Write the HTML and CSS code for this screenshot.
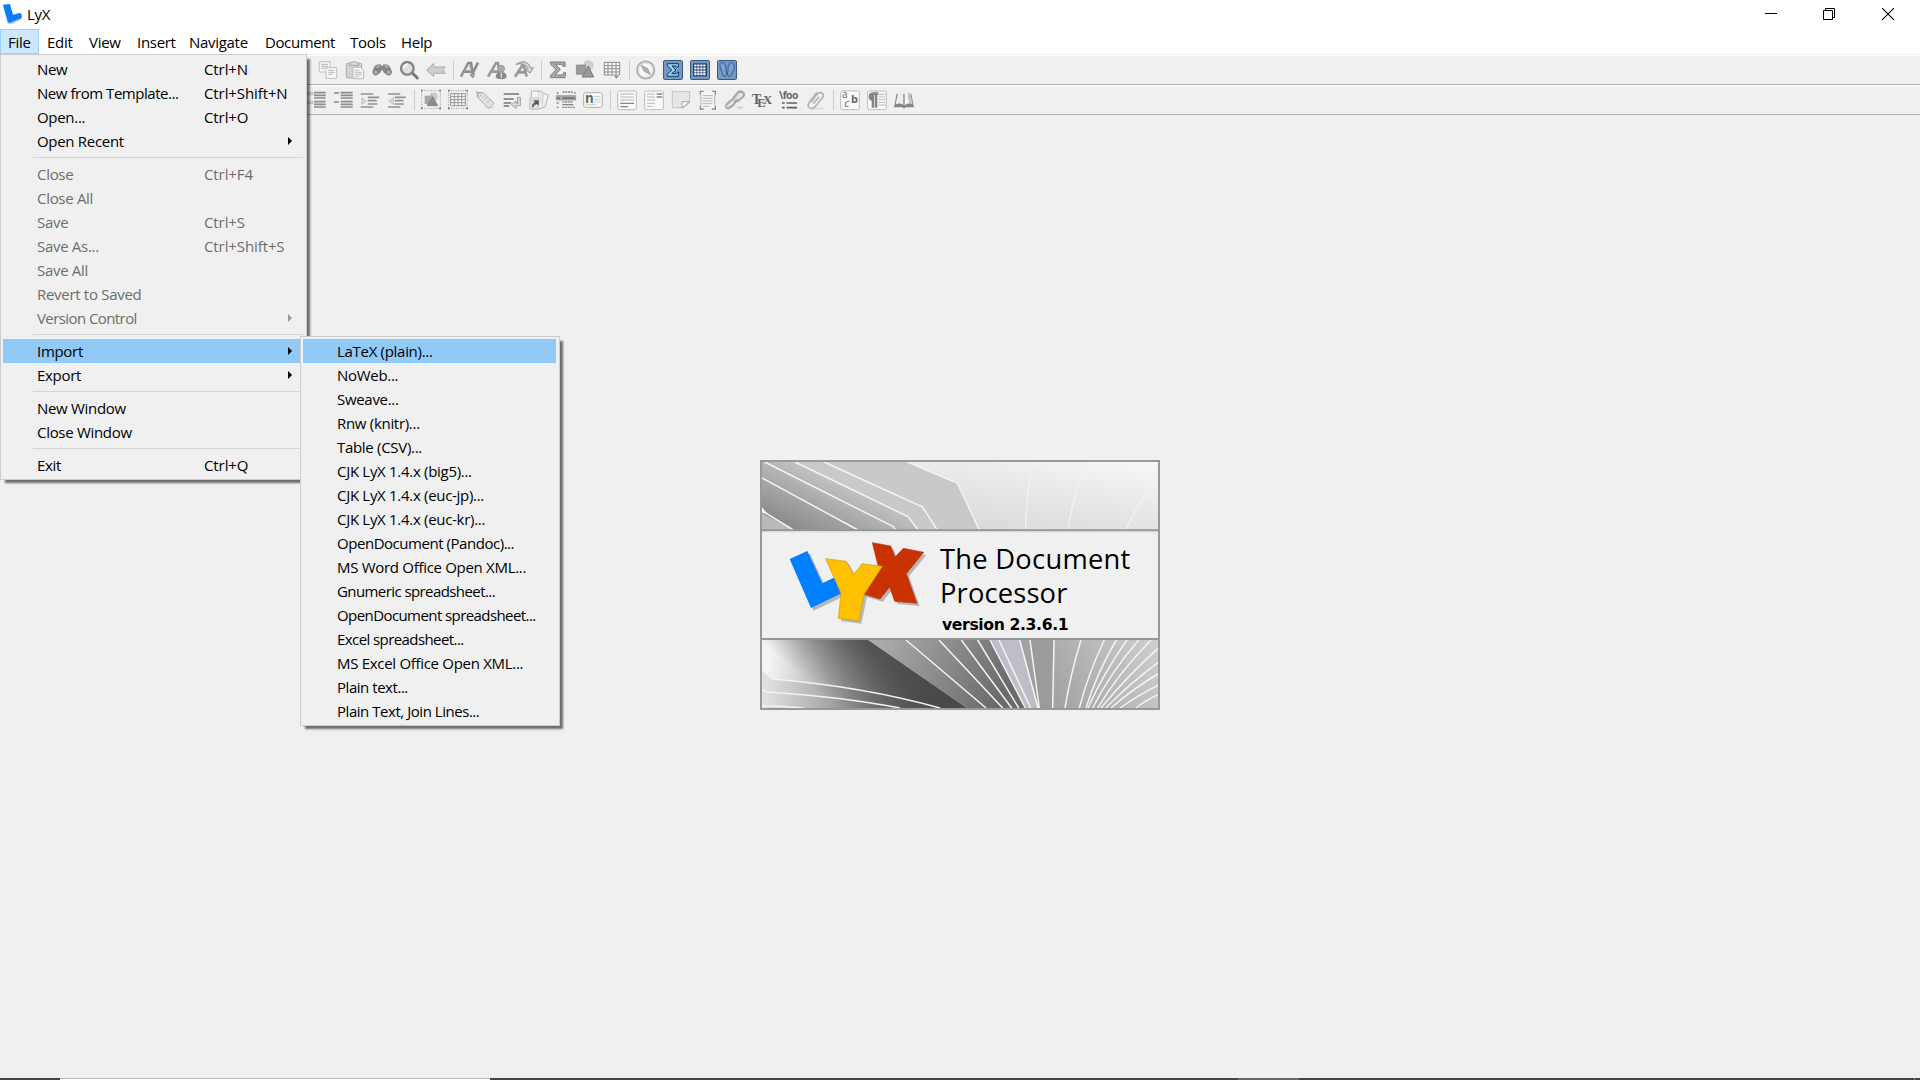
FILE: index.html
```html
<!DOCTYPE html>
<html lang="en">
<head>
<meta charset="utf-8">
<title>LyX</title>
<link rel="stylesheet" href="styles.css">
</head>
<body>
<div class="window">
  <header class="titlebar">
    <svg class="app-icon" viewBox="0 0 60 60"><path d="M5 8L26 6L34 33L62 36L60 48L26 66L18 60Z" fill="#aaa" opacity=".5" transform="translate(-2 -1)"/><path d="M3 2L24 0L33 32L52 27L59 30V42L24 57L18 55Z" fill="#0b7dfa"/></svg>
    <span class="title">LyX</span>
    <div class="controls">
      <svg viewBox="0 0 12 12"><path d="M0 5.500H12" stroke="#000"/></svg>
      <svg viewBox="0 0 12 12"><path d="M.5 2.500H9.500V11.500H.5ZM2.500 2.500V.5H11.500V9.500H9.500" fill="none" stroke="#000"/></svg>
      <svg viewBox="0 0 12 12"><path d="M0 0L12 12M12 0L0 12" stroke="#000" stroke-width="1.100"/></svg>
    </div>
  </header>

  <nav class="menubar">
    <span class="menu-title w-file open">File
      <div class="menu menu-file">
        <div class="item"><span>New</span><kbd>Ctrl+N</kbd></div>
        <div class="item snug"><span>New from Template...</span><kbd>Ctrl+Shift+N</kbd></div>
        <div class="item"><span>Open...</span><kbd>Ctrl+O</kbd></div>
        <div class="item sub"><span>Open Recent</span></div>
        <hr>
        <div class="item off"><span>Close</span><kbd>Ctrl+F4</kbd></div>
        <div class="item off"><span>Close All</span></div>
        <div class="item off"><span>Save</span><kbd>Ctrl+S</kbd></div>
        <div class="item off"><span>Save As...</span><kbd>Ctrl+Shift+S</kbd></div>
        <div class="item off"><span>Save All</span></div>
        <div class="item off"><span>Revert to Saved</span></div>
        <div class="item off sub tight"><span>Version Control</span></div>
        <hr>
        <div class="item sub active"><span>Import</span></div>
        <div class="item sub"><span>Export</span></div>
        <hr>
        <div class="item"><span>New Window</span></div>
        <div class="item"><span>Close Window</span></div>
        <hr>
        <div class="item"><span>Exit</span><kbd>Ctrl+Q</kbd></div>
      </div>
      <div class="menu menu-import">
        <div class="item active"><span>LaTeX (plain)...</span></div>
        <div class="item"><span>NoWeb...</span></div>
        <div class="item"><span>Sweave...</span></div>
        <div class="item"><span>Rnw (knitr)...</span></div>
        <div class="item"><span>Table (CSV)...</span></div>
        <div class="item"><span>CJK LyX 1.4.x (big5)...</span></div>
        <div class="item"><span>CJK LyX 1.4.x (euc-jp)...</span></div>
        <div class="item"><span>CJK LyX 1.4.x (euc-kr)...</span></div>
        <div class="item snug"><span>OpenDocument (Pandoc)...</span></div>
        <div class="item"><span>MS Word Office Open XML...</span></div>
        <div class="item tight"><span>Gnumeric spreadsheet...</span></div>
        <div class="item tight"><span>OpenDocument spreadsheet...</span></div>
        <div class="item tight"><span>Excel spreadsheet...</span></div>
        <div class="item"><span>MS Excel Office Open XML...</span></div>
        <div class="item snug"><span>Plain text...</span></div>
        <div class="item snug"><span>Plain Text, Join Lines...</span></div>
      </div>
    </span>
    <span class="menu-title w-edit">Edit</span>
    <span class="menu-title w-view">View</span>
    <span class="menu-title w-insert">Insert</span>
    <span class="menu-title w-navigate">Navigate</span>
    <span class="menu-title w-document">Document</span>
    <span class="menu-title w-tools">Tools</span>
    <span class="menu-title w-help">Help</span>
  </nav>

  <div class="toolbar standard">
    <!-- copy -->
    <svg viewBox="54 30 60 60"><g fill="#f8f8f8" stroke="#c0c0c0" stroke-width="3"><path d="M58 35H90V66H58Z"/><path d="M78 53H110V85H78Z"/></g><path d="M64 43H84M64 49H84M64 55H76M85 61H103M85 67H103M85 73H97" stroke="#b4b4b4" stroke-width="3"/></svg>
    <!-- paste -->
    <svg viewBox="135 30 60 60"><rect x="139" y="40" width="46" height="44" rx="3" fill="#d2d2d2" stroke="#b0b0b0" stroke-width="3"/><path d="M149 46V38H156Q162 30 168 38H176V46Z" fill="#ddd" stroke="#a4a4a4" stroke-width="3"/><path d="M159 52H181L191 62V86H159Z" fill="#f7f7f7" stroke="#bcbcbc" stroke-width="3"/><path d="M164 61H178M164 67H186M164 73H186M164 79H178" stroke="#bbb" stroke-width="3"/></svg>
    <!-- find -->
    <svg viewBox="216 30 60 60"><path d="M218 67Q219 50 229 44L241 43L246 49L251 43L263 44Q273 50 275 67L267 75L252 69L246 59L240 69L226 76Z" fill="#888"/><circle cx="227" cy="67" r="8" fill="#aaa" stroke="#727272" stroke-width="3"/><circle cx="266" cy="67" r="8" fill="#aaa" stroke="#727272" stroke-width="3"/><path d="M229 52L238 47M254 47L264 52" stroke="#bbb" stroke-width="4"/></svg>
    <!-- zoom -->
    <svg viewBox="297 30 60 60"><path d="M337 69L352 84" stroke="#777" stroke-width="9" stroke-linecap="round"/><circle cx="322" cy="55" r="19" fill="#e0e0e0" stroke="#858585" stroke-width="7"/><path d="M311 53Q314 43 324 43" stroke="#fff" stroke-width="5" fill="none"/></svg>
    <!-- back -->
    <svg viewBox="378 30 60 60"><path d="M380 60L401 40V51H436L428 60L436 70H401V80Z" fill="#cfcfcf" stroke="#ababab" stroke-width="3" stroke-linejoin="round"/></svg>
    <i></i>
    <!-- emphasis -->
    <svg viewBox="480 30 60 60"><path d="M483 80L505 39H513L519 80M491 65H516M513 79L534 38" fill="none" stroke="#8c8c8c" stroke-width="8"/><path d="M485 78L507 42L513 76" fill="none" stroke="#bbb" stroke-width="2"/><path d="M510 74L519 83L524 70" fill="#aaa" stroke="#888" stroke-width="3"/></svg>
    <!-- noun -->
    <svg viewBox="561 30 60 60"><path d="M564 80L588 39H594L599 75M572 65H598" fill="none" stroke="#999" stroke-width="8"/><circle cx="604" cy="56" r="10" fill="#aaa" stroke="#929292" stroke-width="2"/><path d="M587 82Q588 68 598 67H610Q619 69 620 82L612 87H594Z" fill="#888"/><path d="M604 68V83" stroke="#ddd" stroke-width="4"/></svg>
    <!-- apply style -->
    <svg viewBox="642 30 60 60"><path d="M645 80L670 42L680 80M652 67H678" fill="none" stroke="#999" stroke-width="8"/><path d="M648 43Q680 23 693 54L700 53L690 69L676 58L684 56Q673 36 648 43Z" fill="#d6d6d6" stroke="#909090" stroke-width="3"/></svg>
    <i></i>
    <!-- math -->
    <svg viewBox="744 30 60 60"><path d="M751 36H795V49H789L786 43H766L781 58L765 75H788L791 68H797L795 83H751V76L769 59L751 42Z" fill="#aaa" stroke="#7c7c7c" stroke-width="3"/></svg>
    <!-- graphics -->
    <svg viewBox="825 30 60 60"><circle cx="865" cy="46" r="14" fill="#d0d0d0" stroke="#bbb" stroke-width="2"/><path d="M829 45H857V73H829Z" fill="#9c9c9c" stroke="#828282" stroke-width="2"/><path d="M865 48L881 81H846Z" fill="#999" stroke="#777" stroke-width="3"/></svg>
    <!-- table -->
    <svg viewBox="6 30 60 60"><path d="M13 37H59V75H13Z" fill="#f8f8f8"/><path d="M13 37H59V75H13ZM24 37V75M36 37V75M48 37V75M13 47H59M13 56H59M13 66H59" fill="none" stroke="#8d8d8d" stroke-width="3"/><path d="M42 78H56L49 86Z" fill="#888"/></svg>
    <i></i>
    <!-- navigate -->
    <svg viewBox="108 30 60 60"><circle cx="137" cy="60" r="26" fill="#f8f8f8" stroke="#aaa" stroke-width="5"/><circle cx="137" cy="60" r="21" fill="none" stroke="#ccc" stroke-width="2"/><path d="M123 45L144 56L151 74L132 64Z" fill="#b0b0b0" stroke="#999" stroke-width="2"/></svg>
    <!-- math toolbar -->
    <svg viewBox="189 30 60 60"><rect class="pressed" x="190.500" y="31.500" width="57" height="57" rx="4"/><path d="M202 41H235V51H229L227 48H216L228 60L215 71H230L233 66H236L235 79H202V73L215 60L202 47Z" fill="#8fd0f5" stroke="#163a68" stroke-width="3"/></svg>
    <!-- table toolbar -->
    <svg viewBox="270 30 60 60"><rect class="pressed" x="271.500" y="31.500" width="57" height="57" rx="4"/><path d="M279 40H321V79H279Z" fill="#1d3d70"/><path d="M283 44H289V49H283ZM292 44H298V49H292ZM301 44H307V49H301ZM310 44H316V49H310ZM283 53H289V58H283ZM292 53H298V58H292ZM301 53H307V58H301ZM310 53H316V58H310ZM283 62H289V67H283ZM292 62H298V67H292ZM301 62H307V67H301ZM310 62H316V67H310ZM283 70H289V75H283ZM292 70H298V75H292ZM301 70H307V75H301ZM310 70H316V75H310Z" fill="#fff" stroke="#fff" stroke-width="1"/></svg>
    <!-- review toolbar -->
    <svg viewBox="351 30 60 60"><rect class="pressed" x="352.500" y="31.500" width="57" height="57" rx="4"/><g fill="#7ba0d0" stroke="#22508f" stroke-width="2.500"><path d="M364 37Q373 36 377 48L378 61Q382 76 377 79Q370 81 368 72L364 60Q355 43 364 37Z"/><path d="M395 37Q405 39 403 52Q401 64 396 68Q394 79 387 79Q380 77 384 62V52Q387 37 395 37Z"/></g></svg>
  </div>

  <div class="toolbar extra">
    <!-- numbered list -->
    <svg viewBox="18 120 60 60"><path d="M24 128H38V134H24ZM24 155H38V161H24Z" fill="#eee" stroke="#999" stroke-width="2"/><path d="M42 128H77M42 136H77M42 144H77M42 155H77M42 163H77M42 171H77" stroke="#8d8d8d" stroke-width="5"/></svg>
    <!-- bullet list -->
    <svg viewBox="99 120 60 60"><path d="M102 129H117M102 156H117" stroke="#888" stroke-width="5"/><path d="M122 128H158M122 136H158M122 144H158M122 155H158M122 163H158M122 171H158" stroke="#8d8d8d" stroke-width="5"/></svg>
    <!-- increase depth -->
    <svg viewBox="180 120 60 60"><path d="M184 132H218M205 142H236M205 152H228M205 162H230M184 171H218" stroke="#929292" stroke-width="5" stroke-linecap="round"/><path d="M186 143V163L198 153Z" fill="#ddd" stroke="#aaa" stroke-width="2"/></svg>
    <!-- decrease depth -->
    <svg viewBox="261 120 60 60"><path d="M266 132H299M286 142H316M286 152H308M286 162H310M266 171H299" stroke="#929292" stroke-width="5" stroke-linecap="round"/><path d="M280 143V163L267 153Z" fill="#ddd" stroke="#aaa" stroke-width="2"/></svg>
    <i></i>
    <!-- figure float -->
    <svg viewBox="363 120 60 60"><path class="dots" d="M365 122H421V175H365Z"/><path class="corners" d="M363 122H368M418 122H423M363 175H368M418 175H423"/><circle cx="401" cy="140" r="12" fill="#ccc" stroke="#bbb"/><path d="M374 137H400V162H374Z" fill="#a5a5a5"/><path d="M399 141L413 167H381Z" fill="#8d8d8d" stroke="#777" stroke-width="2"/></svg>
    <!-- table float -->
    <svg viewBox="444 120 60 60"><path class="dots" d="M446 122H502V175H446Z"/><path class="corners" d="M444 122H449M499 122H504M444 175H449M499 175H504"/><path d="M452 131H496V167H452ZM463 131V167M474 131V167M485 131V167M452 140H496M452 149H496M452 158H496" fill="#fafafa" stroke="#949494" stroke-width="3"/></svg>
    <!-- label -->
    <svg viewBox="525 120 60 60"><ellipse cx="569" cy="172" rx="15" ry="4" fill="#ddd"/><path d="M531 127L549 128L582 159L567 175L533 143Z" fill="#e4e4e4" stroke="#acacac" stroke-width="3"/><circle cx="539" cy="135" r="4" fill="#fff" stroke="#999" stroke-width="2"/><path d="M548 142L553 138M553 149L561 143M561 157L571 151M527 124L536 130" stroke="#999" stroke-width="2"/></svg>
    <!-- line break -->
    <svg viewBox="606 120 60 60"><path d="M611 132H657M611 147H641M611 159H634M611 168H628" stroke="#929292" stroke-width="6"/><path d="M652 142H661V167H648V175L634 164L648 153V160H653Z" fill="#ddd" stroke="#a0a0a0" stroke-width="3"/></svg>
    <!-- cross-reference -->
    <svg viewBox="687 120 60 60"><path d="M695 123H723L730 130L745 135L735 170L718 177H690Z" fill="#f5f5f5" stroke="#b4b4b4" stroke-width="3"/><path d="M723 123V160M730 130L727 170M715 123V142" stroke="#bbb" stroke-width="2"/><path d="M689 144H717V177H689Z" fill="#ddd" stroke="#bbb" stroke-width="2"/><path d="M698 172Q694 163 706 157L702 152H715V165L710 161Q702 162 698 172Z" fill="#555" stroke="#555" stroke-width="2"/></svg>
    <!-- citation -->
    <svg viewBox="768 120 60 60"><path d="M770 129H778M788 126H818M822 129H827M770 159H777M787 156H818M770 172H777M787 172H824" stroke="#888" stroke-width="4" stroke-dasharray="6 2"/><path d="M769 137H827V150H769Z" fill="#aaa" stroke="#888" stroke-width="2"/><path d="M771 144H780M787 144H824" stroke="#6e6e6e" stroke-width="4"/><path d="M787 164H820" stroke="#888" stroke-width="4"/></svg>
    <!-- nomenclature -->
    <svg viewBox="849 120 60 60"><rect x="851" y="128" width="56" height="44" rx="6" fill="#fafafa" stroke="#b0b0b0" stroke-width="3"/><path d="M882 140H902M882 148H902M882 156H902M857 164H890" stroke="#ccc" stroke-width="3"/><text x="855" y="158" class="ic-bold" font-size="40">n</text></svg>
    <i></i>
    <!-- footnote -->
    <svg viewBox="51 120 60 60"><rect class="page" x="53" y="123" width="56" height="56" rx="5"/><path d="M61 132H102M61 141H102M61 150H102" stroke="#b4b4b4" stroke-width="3"/><path d="M61 160H102M61 170H85" stroke="#858585" stroke-width="4"/></svg>
    <!-- margin note -->
    <svg viewBox="132 120 60 60"><rect class="page" x="134" y="123" width="56" height="56" rx="5"/><path d="M141 132H165M141 141H165M141 150H165M141 160H165M141 169H158" stroke="#b8b8b8" stroke-width="3"/><path d="M170 132H187M170 141H187" stroke="#858585" stroke-width="4"/></svg>
    <!-- note -->
    <svg viewBox="213 120 60 60"><path d="M217 125H269V158L251 173H217Z" fill="#e6e6e6" stroke="#c2c2c2" stroke-width="3"/><path d="M269 155H246V174Z" fill="#f5f5f5" stroke="#ababab" stroke-width="3"/></svg>
    <!-- box -->
    <svg viewBox="294 120 60 60"><path d="M303 127H343V174H303Z" fill="#f7f7f7"/><path d="M301 134V124H311M336 124H346V134M301 167V177H311M336 177H346V167" fill="none" stroke="#8d8d8d" stroke-width="4"/><path d="M303 134V167M344 134V167M308 137H338M308 145H338M308 153H338M308 161H338M308 169H329" stroke="#b4b4b4" stroke-width="3"/></svg>
    <!-- hyperlink -->
    <svg viewBox="375 120 60 60"><g fill="none" stroke-linecap="round"><path d="M399 146L414 127Q424 121 431 130Q435 137 423 145L413 153L405 148" stroke="#aaa" stroke-width="7"/><path d="M404 151L393 151L379 165Q376 174 385 175L399 166L410 151" stroke="#aaa" stroke-width="7"/><path d="M380 170L397 154M400 152L424 130" stroke="#d8d8d8" stroke-width="4"/></g><path d="M408 170H433L421 179Z" fill="#d0d0d0"/></svg>
    <!-- TeX code -->
    <svg viewBox="456 120 60 60"><g class="ic-serif"><text x="456" y="161" font-size="41" textLength="25">T</text><text x="472" y="171" font-size="37">E</text><text x="489" y="161" font-size="38">X</text></g></svg>
    <!-- macro -->
    <svg viewBox="537 120 60 60"><text x="537" y="147" class="ic-bold" font-size="31" textLength="58">\foo</text><path d="M546 159H554M546 173H554M560 159H591M560 173H591" stroke="#606060" stroke-width="5"/></svg>
    <!-- include file -->
    <svg viewBox="618 120 60 60"><ellipse cx="651" cy="176" rx="24" ry="3" fill="#ddd"/><path d="M633 157L651 133Q661 124 668 131Q673 137 666 145L645 171Q634 180 626 171Q622 164 629 155L651 127M640 161L657 141" fill="none" stroke="#b4b4b4" stroke-width="5"/></svg>
    <i></i>
    <!-- text style -->
    <svg viewBox="720 120 60 60"><rect class="page" x="722" y="123" width="56" height="56" rx="5"/><g class="ic-sans"><text x="726" y="144" font-size="30">a</text><text x="733" y="172" font-size="33" font-style="italic">c</text><text x="753" y="158" font-size="33" font-weight="bold">b</text></g></svg>
    <!-- paragraph settings -->
    <svg viewBox="801 120 60 60"><rect class="page" x="803" y="123" width="56" height="56" rx="5"/><path d="M835 133H856M835 141H856M835 149H856M835 157H856M835 165H856" stroke="#bbb" stroke-width="3"/><path d="M835 127V134H832V173H824V135H822V173H815V152Q806 150 806 140Q806 128 818 127Z" fill="#858585"/></svg>
    <!-- thesaurus -->
    <svg viewBox="882 120 60 60"><path d="M882 172L890 131L912 133L934 131L942 172H917Q912 178 907 172Z" fill="#858585"/><path d="M887 163L894 129Q905 125 911 132V165Q900 157 887 163Z" fill="#ededed"/><path d="M913 132L923 125L928 159L913 166Z" fill="#f6f6f6"/><path d="M923 126L932 132L938 163Q926 158 915 165L928 158Z" fill="#c4c4c4"/><path d="M912 131V168" stroke="#888" stroke-width="3"/></svg>
  </div>

  <main class="workspace">
    <svg class="splash" viewBox="30 30 1200 750">
      <defs>
        <linearGradient id="t0" gradientUnits="userSpaceOnUse" x1="100" y1="235" x2="190" y2="40"><stop offset="0" stop-color="#878787"/><stop offset="1" stop-color="#c9c8c6"/></linearGradient>
        <linearGradient id="t1" x1="0" y1="1" x2="1" y2="0"><stop offset="0" stop-color="#cecece"/><stop offset="1" stop-color="#f7f7f7"/></linearGradient>
        <linearGradient id="b0" gradientUnits="userSpaceOnUse" x1="50" y1="690" x2="560" y2="750"><stop offset="0" stop-color="#f4f4f4"/><stop offset=".5" stop-color="#999"/><stop offset="1" stop-color="#3d3d3d"/></linearGradient>
        <linearGradient id="b1" gradientUnits="userSpaceOnUse" x1="330" y1="570" x2="200" y2="720"><stop offset="0" stop-color="#4b4b4b" stop-opacity=".85"/><stop offset="1" stop-color="#4b4b4b" stop-opacity="0"/></linearGradient>
        <linearGradient id="b2" gradientUnits="userSpaceOnUse" x1="400" y1="570" x2="740" y2="770"><stop offset="0" stop-color="#aaa"/><stop offset="1" stop-color="#6a6a6a"/></linearGradient>
        <linearGradient id="b3" gradientUnits="userSpaceOnUse" x1="850" y1="760" x2="1220" y2="570"><stop offset="0" stop-color="#9b9b9b"/><stop offset="1" stop-color="#cfcfcf"/></linearGradient>
      </defs>
      <rect x="30" y="30" width="1200" height="750" fill="#f0f0f0"/>
      <path d="M36 36H1224V240H36Z" fill="url(#t1)"/>
      <path d="M36 36H472L622 99L688 240H36Z" fill="#c9c9ca"/>
      <path d="M36 36H135L474 200L506 240H36Z" fill="url(#t0)"/>
      <path d="M36 190L130 240H36Z" fill="#b9b9b9"/>
      <path d="M36 172L55 194L36 188Z" fill="#fff"/>
      <g fill="none" stroke="#f4f4f4" stroke-width="4.500">
        <path d="M472 36L622 99L688 240M222 36L518 171L562 240M135 36L474 200L504 240M44 36L430 230L437 240M36 84L324 240M36 180L55 194L130 240"/>
        <path d="M851 36Q828 130 827 240M1009 36Q970 130 954 240M1224 80Q1160 165 1128 240" opacity=".8"/>
      </g>
      <path d="M36 570H355L650 774H36Z" fill="url(#b0)"/>
      <path d="M36 570H355L650 774H36Z" fill="url(#b1)"/>
      <path d="M36 660L68 687Q340 710 570 774H36Z" fill="#777" opacity=".15"/>
      <path d="M355 570H720L830 774H650Z" fill="url(#b2)"/>
      <path d="M720 570H810L866 774H828Z" fill="#bebec8"/>
      <path d="M810 570H1224V774H866Z" fill="url(#b3)"/>
      <path d="M844 570H912L908 774H868Z" fill="#9b9b9b"/>
      <g fill="none" stroke="#f3f3f3" stroke-width="4.500">
        <path d="M36 660L68 687Q340 710 570 774M36 720L52 726Q270 740 450 774M36 767Q100 768 160 774"/>
        <path d="M468 570L708 774M567 570L758 774M634 570L785 774M683 570L806 774M720 570L826 774M747 570L842 774M809 570L864 774M840 570L868 774"/>
        <path d="M912 570L908 774M993 570Q962 670 945 774M1063 570Q1015 670 988 774M1099 570Q1040 670 1008 774M1131 570Q1060 670 1014 774M1166 570Q1080 670 1028 774M1203 570Q1105 670 1043 774M1224 595Q1130 680 1053 774M1224 638Q1140 700 1067 774M1224 672Q1150 715 1083 774M1224 706Q1165 735 1110 774M1224 734Q1180 755 1158 774"/>
      </g>
      <path d="M30 241H1230M30 567H1230" stroke="#969696" stroke-width="6"/>
      <path d="M36 246H1224" stroke="#ddd" stroke-width="3"/>
      <rect x="33" y="33" width="1194" height="744" fill="none" stroke="#999" stroke-width="6"/>
      <g fill="#b7b7b7" transform="translate(8 8)"><path d="M119 327L172 303L217 400L256 381L275 430L183 474Z"/><path d="M367 278L422 288L435 321L460 295L521 307L469 371L501 460L434 454L419 411L390 447L342 433L395 350Z"/><path d="M227 326L289 334L311 374L336 341L397 349L343 432L326 513L265 505L273 430Z"/></g>
      <path d="M119 327L172 303L217 400L256 381L275 430L183 474Z" fill="#007fff"/>
      <path d="M367 278L422 288L435 321L460 295L521 307L469 371L501 460L434 454L419 411L390 447L342 433L385 350Z" fill="#c93100" stroke="#b93a15" stroke-width="2"/>
      <path d="M227 326L289 334L311 374L336 341L397 349L343 432L326 513L265 505L273 430Z" fill="#ffc000" stroke="#d09b10" stroke-width="2"/>
      <text x="570" y="357" class="splash-text" font-size="82" textLength="571">The Document</text>
      <text x="570" y="460" class="splash-text" font-size="82" textLength="382">Processor</text>
      <text x="576" y="540" class="splash-version" font-size="47" textLength="380">version 2.3.6.1</text>
    </svg>
  </main>

  <footer class="taskbar"><div class="preview"></div><div class="task"></div><div class="peek"></div></footer>
</div>
</body>
</html>
```
FILE: styles.css
```css
* { box-sizing: border-box; }
body {
  margin: 0;
  font: 15px/24px "Open Sans", "Noto Sans", sans-serif;
  letter-spacing: -0.3px;
  color: #000;
}
.window {
  display: flex;
  flex-direction: column;
  width: 1920px;
  height: 1080px;
  overflow: hidden;
  background: #f0f0f0;
}
.titlebar {
  display: flex;
  flex: 0 0 29px;
  background: #fff;
}
.app-icon { width: 20px; height: 20px; margin: 4px 5px 0 2px; }
.title { line-height: 29px; }
.controls { display: flex; gap: 47px; margin: 8px 26px 0 auto; }
.controls svg { width: 12px; height: 12px; }
.controls svg:first-child { margin-right: -1px; }

.menubar {
  display: flex;
  flex: 0 0 27px;
  background: linear-gradient(#efefef, #efefef) 0 25px / 100% 1px no-repeat #fff;
}
.menu-title {
  position: relative;
  height: 25px;
  line-height: 26px;
  padding-left: 8px;
  white-space: nowrap;
}
.menu-title.open { background: #cce8ff; box-shadow: inset 0 0 0 1px #99d1ff; }
.w-file { width: 39px; }
.w-edit { width: 42px; padding-left: 8px; }
.w-view { width: 48px; padding-left: 8px; }
.w-insert { width: 52px; }
.w-navigate { width: 76px; }
.w-document { width: 85px; letter-spacing: -0.4px; }
.w-tools { width: 51px; }
.w-help { width: 48px; }

.menu {
  position: absolute;
  z-index: 2;
  padding: 2px 3px 2px 2px;
  border: 1px solid #ccc;
  background: #f0f0f0;
  line-height: 24px;
  box-shadow: 4px 4px 2px -1px rgba(0, 0, 0, .55);
}
.menu-file { left: 0; top: 25px; width: 307px; height: 426px; padding-top: 0; }
.menu-file > .item:first-child { margin-top: 2px; }
.menu-import { left: 300px; top: 307px; width: 260px; height: 390px; padding-right: 3px; }
.item {
  display: flex;
  height: 24px;
  padding-left: 34px;
  line-height: 24px;
}
.item > span { width: 167px; }
.menu-import .item > span { width: auto; }
.item kbd { font: inherit; letter-spacing: -0.1px; }
.item.snug { letter-spacing: -0.46px; }
.item.tight { letter-spacing: -0.58px; }
.item.active { background: #91c9f7; }
.item.off { color: #6d6d6d; }
.item.sub::after {
  content: "";
  width: 4px;
  height: 8px;
  margin: 8px 0 0 84px;
  background: currentColor;
  clip-path: polygon(0 0, 100% 50%, 0 100%);
}
.item.off.sub::after { background: #999; }
.menu hr {
  height: 1px;
  margin: 4px 0 4px 30px;
  border: 0;
  background: #d5d5d5;
}

.toolbar { display: flex; align-items: flex-start; border-bottom: 1px solid #b4b4b4; }
.toolbar svg { flex: none; width: 20px; height: 20px; margin: 0 3px 0 4px; overflow: visible; }
.toolbar i { width: 1px; height: 20px; margin: 0 2px 0 4px; background: #ccc; }
.standard { flex: 0 0 29px; padding: 4px 0 0 314px; }
.extra { flex: 0 0 30px; padding: 4px 0 0 302px; border-top: 1px solid #fdfdfd; }
.pressed { fill: #7397bf; stroke: #395a82; stroke-width: 3; }
.page { fill: #fafafa; stroke: #bdbdbd; stroke-width: 3; }
.dots { fill: none; stroke: #999; stroke-width: 3; stroke-dasharray: 3 4; }
.corners { stroke: #777; stroke-width: 5; }
.toolbar text { letter-spacing: 0; fill: #666; }
.ic-bold { font-family: "Open Sans", sans-serif; font-weight: 700; }
.ic-sans { font-family: "Open Sans", sans-serif; }
.ic-serif { font-family: "Liberation Serif", serif; font-weight: 700; }

.workspace { flex: 1; padding: 345px 0 0 760px; }
.splash { display: block; width: 400px; height: 250px; }
.splash text { letter-spacing: 0; }
.splash-text { font-family: "Open Sans", "Noto Sans", sans-serif; }
.splash-version { font-family: "DejaVu Sans", sans-serif; font-weight: 700; }

.taskbar { display: flex; flex: 0 0 2px; background: #444; }
.preview { width: 430px; margin-left: 60px; background: #fff; border-top: 1px solid #bbb; }
.task { width: 61px; margin-left: 748px; background: #686868; }
.peek { width: 1px; margin-left: 615px; background: #888; }
```
